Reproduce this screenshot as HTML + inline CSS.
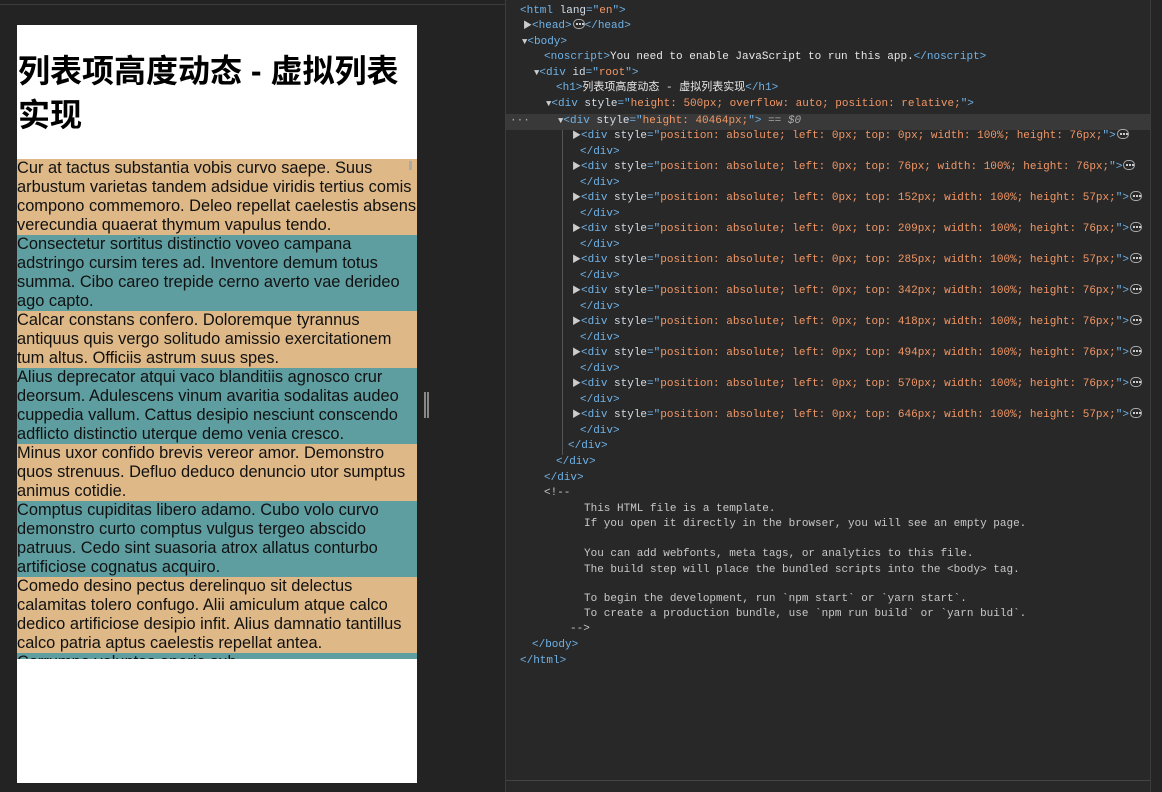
<!DOCTYPE html>
<html><head><meta charset="utf-8"><style>
*{margin:0;padding:0;box-sizing:border-box}
body{width:1162px;height:792px;background:#232323;position:relative;overflow:hidden;font-family:"Liberation Sans","Noto Sans CJK SC",sans-serif}
#topbar{position:absolute;left:0;top:0;width:505px;height:5px;border-bottom:1px solid #3a3a3a}
#page{position:absolute;left:17px;top:25px;width:400px;height:758px;background:#fff}
h1{position:absolute;left:1px;top:24px;font-size:32px;line-height:44px;font-weight:bold;color:#000;white-space:nowrap}
#list{position:absolute;left:0;top:134px;width:400px;height:500px;overflow:hidden}
.r{position:absolute;left:0;width:400px;font-size:16.4px;line-height:19px;color:#111;white-space:nowrap}
.t{background:#deb887}.c{background:#5f9ea0}
#thumb{position:absolute;left:392px;top:2px;width:3px;height:9px;background:#aaa}
#dv{position:absolute;left:505px;top:0;width:645px;height:792px;background:#282828;border-left:1px solid #3c3c3c}
.l{position:absolute;font-family:"Liberation Mono","Noto Sans CJK SC",monospace;font-size:11px;line-height:15px;color:#e8e8e8;white-space:pre}
.g{color:#6fb3e8}.a{color:#d4dde6}.v{color:#f29766}.cm{color:#c8c8c8}
.tri{color:#ccc;font-size:9px}
.dots{display:inline-block;width:12px;height:10px;border:1px solid #aaa;border-radius:5px;vertical-align:-1px;position:relative;margin-left:1px}
.dots::after{content:"";position:absolute;left:2px;top:3px;width:2px;height:2px;background:#ccc;box-shadow:3px 0 0 #ccc,6px 0 0 #ccc}
#sel{position:absolute;left:0;top:114px;width:645px;height:16px;background:#393939}
#guide{position:absolute;left:56px;top:130px;width:1px;height:325px;background:#555}
#bot{position:absolute;left:0;top:780px;width:645px;height:12px;border-top:1px solid #444;background:#282828}
#rp{position:absolute;left:1150px;top:0;width:12px;height:792px;background:#252525;border-left:1px solid #3c3c3c}
#handle{position:absolute;left:424px;top:392px;width:5px;height:26px;border-left:2px solid #888;border-right:2px solid #888}
</style></head><body>
<div id="topbar"></div>
<div id="page">
<h1>列表项高度动态 - 虚拟列表<br>实现</h1>
<div id="list">
<div class="r t" style="top:0;height:76px">Cur at tactus substantia vobis curvo saepe. Suus<br>arbustum varietas tandem adsidue viridis tertius comis<br>compono commemoro. Deleo repellat caelestis absens<br>verecundia quaerat thymum vapulus tendo.</div>
<div class="r c" style="top:76px;height:76px">Consectetur sortitus distinctio voveo campana<br>adstringo cursim teres ad. Inventore demum totus<br>summa. Cibo careo trepide cerno averto vae derideo<br>ago capto.</div>
<div class="r t" style="top:152px;height:57px">Calcar constans confero. Doloremque tyrannus<br>antiquus quis vergo solitudo amissio exercitationem<br>tum altus. Officiis astrum suus spes.</div>
<div class="r c" style="top:209px;height:76px">Alius deprecator atqui vaco blanditiis agnosco crur<br>deorsum. Adulescens vinum avaritia sodalitas audeo<br>cuppedia vallum. Cattus desipio nesciunt conscendo<br>adflicto distinctio uterque demo venia cresco.</div>
<div class="r t" style="top:285px;height:57px">Minus uxor confido brevis vereor amor. Demonstro<br>quos strenuus. Defluo deduco denuncio utor sumptus<br>animus cotidie.</div>
<div class="r c" style="top:342px;height:76px">Comptus cupiditas libero adamo. Cubo volo curvo<br>demonstro curto comptus vulgus tergeo abscido<br>patruus. Cedo sint suasoria atrox allatus conturbo<br>artificiose cognatus acquiro.</div>
<div class="r t" style="top:418px;height:76px">Comedo desino pectus derelinquo sit delectus<br>calamitas tolero confugo. Alii amiculum atque calco<br>dedico artificiose desipio infit. Alius damnatio tantillus<br>calco patria aptus caelestis repellat antea.</div>
<div class="r c" style="top:494px;height:76px">Corrumpo voluptas aperio sub</div>
<div id="thumb"></div>
</div>
</div>
<div id="handle"></div>
<div id="dv">
<div id="sel"></div>
<div id="guide"></div>
<div class="l" style="left:4px;top:114px;color:#aaa">···</div>
<div class="l" style="left:14px;top:4px"><span class="g">&lt;html</span> <span class="a">lang</span><span class="g">="</span><span class="v">en</span><span class="g">"&gt;</span></div>
<div class="l" style="left:17px;top:19px"><span class="tri">▶</span><span class="g">&lt;head&gt;</span><span class="dots"></span><span class="g">&lt;/head&gt;</span></div>
<div class="l" style="left:16px;top:35px"><span class="tri">▼</span><span class="g">&lt;body&gt;</span></div>
<div class="l" style="left:38px;top:50px"><span class="g">&lt;noscript&gt;</span>You need to enable JavaScript to run this app.<span class="g">&lt;/noscript&gt;</span></div>
<div class="l" style="left:28px;top:66px"><span class="tri">▼</span><span class="g">&lt;div</span> <span class="a">id</span><span class="g">="</span><span class="v">root</span><span class="g">"&gt;</span></div>
<div class="l" style="left:50px;top:81px"><span class="g">&lt;h1&gt;</span>列表项高度动态 - 虚拟列表实现<span class="g">&lt;/h1&gt;</span></div>
<div class="l" style="left:40px;top:97px"><span class="tri">▼</span><span class="g">&lt;div</span> <span class="a">style</span><span class="g">="</span><span class="v">height: 500px; overflow: auto; position: relative;</span><span class="g">"&gt;</span></div>
<div class="l" style="left:52px;top:114px"><span class="tri">▼</span><span class="g">&lt;div</span> <span class="a">style</span><span class="g">="</span><span class="v">height: 40464px;</span><span class="g">"&gt;</span> <span style="color:#aaa">== <i>$0</i></span></div>
<div class="l" style="left:66px;top:129px"><span class="tri">▶</span><span class="g">&lt;div</span> <span class="a">style</span><span class="g">="</span><span class="v">position: absolute; left: 0px; top: 0px; width: 100%; height: 76px;</span><span class="g">"&gt;</span><span class="dots"></span></div>
<div class="l" style="left:74px;top:145px"><span class="g">&lt;/div&gt;</span></div>
<div class="l" style="left:66px;top:160px"><span class="tri">▶</span><span class="g">&lt;div</span> <span class="a">style</span><span class="g">="</span><span class="v">position: absolute; left: 0px; top: 76px; width: 100%; height: 76px;</span><span class="g">"&gt;</span><span class="dots"></span></div>
<div class="l" style="left:74px;top:176px"><span class="g">&lt;/div&gt;</span></div>
<div class="l" style="left:66px;top:191px"><span class="tri">▶</span><span class="g">&lt;div</span> <span class="a">style</span><span class="g">="</span><span class="v">position: absolute; left: 0px; top: 152px; width: 100%; height: 57px;</span><span class="g">"&gt;</span><span class="dots"></span></div>
<div class="l" style="left:74px;top:207px"><span class="g">&lt;/div&gt;</span></div>
<div class="l" style="left:66px;top:222px"><span class="tri">▶</span><span class="g">&lt;div</span> <span class="a">style</span><span class="g">="</span><span class="v">position: absolute; left: 0px; top: 209px; width: 100%; height: 76px;</span><span class="g">"&gt;</span><span class="dots"></span></div>
<div class="l" style="left:74px;top:238px"><span class="g">&lt;/div&gt;</span></div>
<div class="l" style="left:66px;top:253px"><span class="tri">▶</span><span class="g">&lt;div</span> <span class="a">style</span><span class="g">="</span><span class="v">position: absolute; left: 0px; top: 285px; width: 100%; height: 57px;</span><span class="g">"&gt;</span><span class="dots"></span></div>
<div class="l" style="left:74px;top:269px"><span class="g">&lt;/div&gt;</span></div>
<div class="l" style="left:66px;top:284px"><span class="tri">▶</span><span class="g">&lt;div</span> <span class="a">style</span><span class="g">="</span><span class="v">position: absolute; left: 0px; top: 342px; width: 100%; height: 76px;</span><span class="g">"&gt;</span><span class="dots"></span></div>
<div class="l" style="left:74px;top:300px"><span class="g">&lt;/div&gt;</span></div>
<div class="l" style="left:66px;top:315px"><span class="tri">▶</span><span class="g">&lt;div</span> <span class="a">style</span><span class="g">="</span><span class="v">position: absolute; left: 0px; top: 418px; width: 100%; height: 76px;</span><span class="g">"&gt;</span><span class="dots"></span></div>
<div class="l" style="left:74px;top:331px"><span class="g">&lt;/div&gt;</span></div>
<div class="l" style="left:66px;top:346px"><span class="tri">▶</span><span class="g">&lt;div</span> <span class="a">style</span><span class="g">="</span><span class="v">position: absolute; left: 0px; top: 494px; width: 100%; height: 76px;</span><span class="g">"&gt;</span><span class="dots"></span></div>
<div class="l" style="left:74px;top:362px"><span class="g">&lt;/div&gt;</span></div>
<div class="l" style="left:66px;top:377px"><span class="tri">▶</span><span class="g">&lt;div</span> <span class="a">style</span><span class="g">="</span><span class="v">position: absolute; left: 0px; top: 570px; width: 100%; height: 76px;</span><span class="g">"&gt;</span><span class="dots"></span></div>
<div class="l" style="left:74px;top:393px"><span class="g">&lt;/div&gt;</span></div>
<div class="l" style="left:66px;top:408px"><span class="tri">▶</span><span class="g">&lt;div</span> <span class="a">style</span><span class="g">="</span><span class="v">position: absolute; left: 0px; top: 646px; width: 100%; height: 57px;</span><span class="g">"&gt;</span><span class="dots"></span></div>
<div class="l" style="left:74px;top:424px"><span class="g">&lt;/div&gt;</span></div>
<div class="l" style="left:62px;top:439px"><span class="g">&lt;/div&gt;</span></div>
<div class="l" style="left:50px;top:455px"><span class="g">&lt;/div&gt;</span></div>
<div class="l" style="left:38px;top:471px"><span class="g">&lt;/div&gt;</span></div>
<div class="l cm" style="left:38px;top:486px">&lt;!--</div>
<div class="l cm" style="left:78px;top:502px">This HTML file is a template.</div>
<div class="l cm" style="left:78px;top:517px">If you open it directly in the browser, you will see an empty page.</div>
<div class="l cm" style="left:78px;top:547px">You can add webfonts, meta tags, or analytics to this file.</div>
<div class="l cm" style="left:78px;top:563px">The build step will place the bundled scripts into the &lt;body&gt; tag.</div>
<div class="l cm" style="left:78px;top:592px">To begin the development, run `npm start` or `yarn start`.</div>
<div class="l cm" style="left:78px;top:607px">To create a production bundle, use `npm run build` or `yarn build`.</div>
<div class="l cm" style="left:64px;top:622px">--&gt;</div>
<div class="l" style="left:26px;top:638px"><span class="g">&lt;/body&gt;</span></div>
<div class="l" style="left:14px;top:654px"><span class="g">&lt;/html&gt;</span></div>
<div id="bot"></div>
</div>
<div id="rp"></div>
</body></html>
